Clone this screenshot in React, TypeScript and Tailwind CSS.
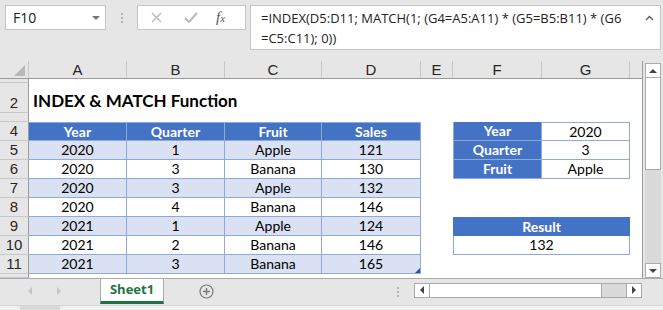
import React from "react"

const cell = "font-['Lato',sans-serif] text-[14px] text-black"
const hdrFont = "font-['Liberation_Sans',Arial,sans-serif] text-[15px] text-[#262626]"
const uiFont = "font-['Open_Sans',sans-serif]"

const colW = ["w-[98px]", "w-[98px]", "w-[97px]", "w-[99px]", "w-[32px]", "w-[89px]", "w-[88px]", "w-[12px]"]
const letters = ["A", "B", "C", "D", "E", "F", "G", ""]

const data = [
  ["2020", "1", "Apple", "121"],
  ["2020", "3", "Banana", "130"],
  ["2020", "3", "Apple", "132"],
  ["2020", "4", "Banana", "146"],
  ["2021", "1", "Apple", "124"],
  ["2021", "2", "Banana", "146"],
  ["2021", "3", "Banana", "165"],
]

const lookup: Record<number, [string, string]> = {
  4: ["Year", "2020"],
  5: ["Quarter", "3"],
  6: ["Fruit", "Apple"],
}

function RowHead({ n, h = "h-[19px]" }: { n: string; h?: string }) {
  return (
    <div className={`w-[29px] ${h} shrink-0 bg-[#e6e6e6] border-r border-b border-r-[#9b9b9b] border-b-[#c8c8c8] flex items-end justify-center overflow-hidden leading-[18px] ${hdrFont}`}>
      {n}
    </div>
  )
}

function Blank({ w }: { w: string }) {
  return <div className={`${w} shrink-0`} />
}

function TableRow({ r }: { r: number }) {
  const isHead = r === 4
  const vals = isHead ? ["Year", "Quarter", "Fruit", "Sales"] : data[r - 5]
  const band = !isHead && r % 2 === 1
  const bg = isHead ? "bg-[#4472c4] text-white font-bold" : band ? "bg-[#d9e1f2]" : "bg-white"
  const lk = lookup[r]
  return (
    <div className="flex h-[19px]">
      <RowHead n={String(r)} />
      {vals.map((v, i) => (
        <div
          key={i}
          className={`${colW[i]} shrink-0 relative border-r border-b border-[#8ea9db] ${isHead ? "border-t" : ""} ${bg} ${cell} flex items-center justify-center leading-none`}
        >
          {v}
          {r === 11 && i === 3 && (
            <svg className="absolute right-0 bottom-0" width="5" height="5" viewBox="0 0 5 5">
              <path d="M5 0 L5 5 L0 5 Z" fill="#2f52a0" />
            </svg>
          )}
        </div>
      ))}
      <Blank w={colW[4]} />
      {lk ? (
        <>
          <div className={`${colW[5]} shrink-0 border border-t-0 ${isHead ? "border-t" : ""} border-[#8ea9db] bg-[#4472c4] text-white font-bold ${cell} flex items-center justify-center leading-none`}>
            {lk[0]}
          </div>
          <div className={`${colW[6]} shrink-0 border-r border-b ${isHead ? "border-t" : ""} border-[#8ea9db] bg-white ${cell} flex items-center justify-center leading-none`}>
            {lk[1]}
          </div>
        </>
      ) : r === 9 ? (
        <div className={`w-[177px] shrink-0 bg-[#4472c4] text-white font-bold ${cell} flex items-center justify-center leading-none`}>
          Result
        </div>
      ) : r === 10 ? (
        <div className={`w-[177px] shrink-0 border border-t-0 border-[#8ea9db] bg-white ${cell} flex items-center justify-center leading-none`}>
          132
        </div>
      ) : (
        <Blank w="w-[177px]" />
      )}
      <Blank w={colW[7]} />
    </div>
  )
}

function Tri({ dir, color = "#444" }: { dir: "up" | "down" | "left" | "right"; color?: string }) {
  const d = {
    up: "M0 5 L4 1 L8 5 Z",
    down: "M0 1 L8 1 L4 5 Z",
    left: "M5 0 L5 8 L1 4 Z",
    right: "M1 0 L1 8 L5 4 Z",
  }[dir]
  const vert = dir === "up" || dir === "down"
  return (
    <svg width={vert ? 8 : 6} height={vert ? 6 : 8} viewBox={vert ? "0 0 8 6" : "0 0 6 8"}>
      <path d={d} fill={color} />
    </svg>
  )
}

function Dots() {
  return (
    <div className="flex flex-col gap-[2px]">
      <div className="w-[2px] h-[2px] bg-[#b4b4b4]" />
      <div className="w-[2px] h-[2px] bg-[#b4b4b4]" />
      <div className="w-[2px] h-[2px] bg-[#b4b4b4]" />
    </div>
  )
}

export default function App() {
  return (
    <div className="w-[663px] h-[310px] bg-[#e6e6e6] overflow-hidden flex flex-col">
      {/* formula bar */}
      <div className="h-[61px] shrink-0 flex items-start pt-[5px] pl-[5px]">
        <div className={`w-[101px] h-[25px] bg-white border border-[#c6c6c6] flex items-center justify-between pl-[7px] pr-[5px] ${uiFont} text-[14px] text-[#222]`}>
          <span>F10</span>
          <Tri dir="down" color="#777" />
        </div>
        <div className="w-[31px] h-[25px] flex items-center justify-center">
          <Dots />
        </div>
        <div className="w-[109px] h-[25px] bg-white border border-[#c6c6c6] flex items-center">
          <svg className="ml-[13px]" width="11" height="11" viewBox="0 0 11 11">
            <path d="M1 1 L10 10 M10 1 L1 10" stroke="#b9b9b9" strokeWidth="1.4" />
          </svg>
          <svg className="ml-[22px]" width="14" height="11" viewBox="0 0 14 11">
            <path d="M1 6 L5 10 L13 1" stroke="#b9b9b9" strokeWidth="2" fill="none" />
          </svg>
          <span className="ml-[18px] font-['Liberation_Serif',serif] italic text-[15px] text-[#555] leading-none">
            f<span className="text-[11px]">x</span>
          </span>
        </div>
        <div className={`ml-[4px] w-[411px] h-[45px] bg-white border border-[#c6c6c6] flex ${uiFont} text-[13px] text-[#222]`}>
          <div className="flex-1 pl-[10px] pt-[2px] leading-[20px] whitespace-nowrap">
            <div>=INDEX(D5:D11; MATCH(1; (G4=A5:A11) * (G5=B5:B11) * (G6</div>
            <div>=C5:C11); 0))</div>
          </div>
          <div className="w-[22px] pt-[9px] flex justify-center">
            <svg width="9" height="6" viewBox="0 0 9 6">
              <path d="M1 5 L4.5 1.5 L8 5" stroke="#666" strokeWidth="1.5" fill="none" />
            </svg>
          </div>
        </div>
      </div>

      {/* sheet + vertical scrollbar */}
      <div className="h-[217px] shrink-0 flex">
        <div className="w-[643px] shrink-0 border-r border-[#9b9b9b] bg-white flex flex-col overflow-hidden">
          {/* column headers */}
          <div className="flex h-[18px] bg-[#e6e6e6] border-b border-[#9b9b9b]">
            <div className="w-[29px] shrink-0 border-r border-[#c8c8c8] flex items-end justify-end pr-[3px] pb-[2px]">
              <svg width="11" height="11" viewBox="0 0 11 11">
                <path d="M11 0 L11 11 L0 11 Z" fill="#b8b8b8" />
              </svg>
            </div>
            {letters.map((l, i) => (
              <div
                key={i}
                className={`${colW[i]} shrink-0 ${i < 7 ? "border-r border-[#c8c8c8]" : ""} ${hdrFont} flex items-end justify-center leading-[17px]`}
              >
                {l}
              </div>
            ))}
          </div>
          <div className="flex h-[4px]">
            <RowHead n="" h="h-[4px]" />
          </div>
          <div className="flex h-[30px]">
            <RowHead n="2" h="h-[30px]" />
            <div className="flex items-end pb-[4px] pl-[4px] font-['Lato',sans-serif] font-bold text-[17px] text-black leading-none whitespace-nowrap">
              INDEX &amp; MATCH Function
            </div>
          </div>
          <div className="flex h-[9px]">
            <RowHead n="" h="h-[9px]" />
          </div>
          {[4, 5, 6, 7, 8, 9, 10, 11].map((r) => (
            <TableRow key={r} r={r} />
          ))}
          <div className="flex h-[4px]">
            <RowHead n="" h="h-[4px]" />
          </div>
        </div>
        <div className="w-[20px] shrink-0 pl-[2px] pt-[2px] flex flex-col">
          <div className="w-[16px] h-[15px] bg-white border border-[#ababab] flex items-center justify-center">
            <Tri dir="up" />
          </div>
          <div className="w-[16px] flex-1 bg-[#dadada] flex flex-col">
            <div className="h-[92px] bg-white border border-t-0 border-[#ababab]" />
          </div>
          <div className="w-[16px] h-[15px] bg-white border border-[#ababab] flex items-center justify-center">
            <Tri dir="down" />
          </div>
        </div>
      </div>

      {/* sheet tabs */}
      <div className="h-[27px] shrink-0 flex border-t border-[#ababab]">
        <div className="w-[100px] shrink-0 flex items-center pl-[27px] gap-[23px] pb-[2px]">
          <Tri dir="left" color="#c4c4c4" />
          <Tri dir="right" color="#c4c4c4" />
        </div>
        <div className={`w-[64px] h-[25px] shrink-0 bg-white border-x border-[#ababab] border-b-[3px] border-b-[#217346] flex items-center justify-center ${uiFont} font-bold text-[13px] text-[#217346]`}>
          Sheet1
        </div>
        <div className="w-[35px] shrink-0" />
        <div className="h-[25px] flex items-center">
          <svg width="15" height="15" viewBox="0 0 15 15">
            <circle cx="7.5" cy="7.5" r="6.5" fill="none" stroke="#7a7a7a" strokeWidth="1.2" />
            <path d="M7.5 4 L7.5 11 M4 7.5 L11 7.5" stroke="#7a7a7a" strokeWidth="1.4" />
          </svg>
        </div>
        <div className="w-[183px] shrink-0" />
        <div className="h-[25px] flex items-center">
          <Dots />
        </div>
        <div className="w-[15px] shrink-0" />
        <div className="h-[25px] flex items-center pb-[3px]">
          <div className="w-[228px] h-[15px] flex bg-[#dadada] border border-[#ababab]">
            <div className="w-[15px] bg-white border-r border-[#ababab] flex items-center justify-center">
              <Tri dir="left" />
            </div>
            <div className="w-[172px] bg-white border-r border-[#ababab]" />
            <div className="flex-1" />
            <div className="w-[15px] bg-white border-l border-[#ababab] flex items-center justify-center">
              <Tri dir="right" />
            </div>
          </div>
        </div>
      </div>
      <div className="flex-1 bg-[#f0f0f0] border-t border-[#d4d4d4] flex">
        <div className="ml-[20px] w-[40px] bg-[#d8d8d8]" />
      </div>
    </div>
  )
}
